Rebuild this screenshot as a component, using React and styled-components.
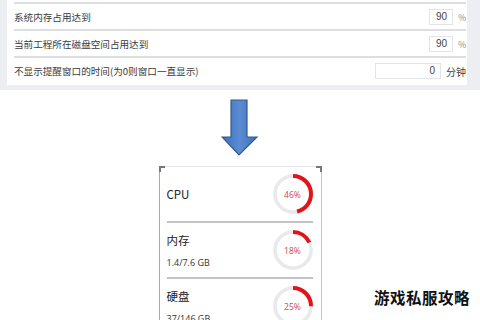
import styled, { createGlobalStyle } from "styled-components";

const GlobalStyle = createGlobalStyle`
    html, body {
        margin: 0;
        padding: 0;
        background: #ffffff;
    }
    body {
        width: 480px;
        height: 320px;
        overflow: hidden;
        font-family: "Noto Sans CJK SC", "Noto Sans", sans-serif;
    }
`

const settings = [
    { label: "系统内存占用达到", value: "90", unit: "%", wide: false },
    { label: "当前工程所在磁盘空间占用达到", value: "90", unit: "%", wide: false },
    { label: "不显示提醒窗口的时间(为0则窗口一直显示)", value: "0", unit: "分钟", wide: true },
]

const monitors = [
    { name: "CPU", detail: null, percent: 46 },
    { name: "内存", detail: "1.4/7.6 GB", percent: 18 },
    { name: "硬盘", detail: "37/146 GB", percent: 25 },
]

function Gauge({ percent }) {
    const r = 18
    const c = 2 * Math.PI * r
    return (
        <GaugeBox>
            <svg width="42" height="42" viewBox="0 0 42 42">
                <circle cx="21" cy="21" r={r} fill="none" stroke="#e8e9ec" strokeWidth="3.5" />
                <circle
                    cx="21" cy="21" r={r} fill="none" stroke="#e0141a" strokeWidth="4"
                    strokeDasharray={`${(c * percent) / 100} ${c}`}
                    transform="rotate(-90 21 21)"
                />
            </svg>
            <GaugeText>{percent}%</GaugeText>
        </GaugeBox>
    )
}

export default function App() {
    return (
        <>
            <GlobalStyle />
            <Page>
                <SettingsPanel>
                    <SettingsCard>
                        {settings.map((s) => (
                            <SettingRow key={s.label}>
                                <span>{s.label}</span>
                                <Control>
                                    <NumberBox wide={s.wide}>{s.value}</NumberBox>
                                    <Unit cjk={s.wide}>{s.unit}</Unit>
                                </Control>
                            </SettingRow>
                        ))}
                    </SettingsCard>
                </SettingsPanel>

                <ArrowWrap>
                    <svg width="38" height="58" viewBox="0 0 38 58">
                        <defs>
                            <linearGradient id="arrowFill" x1="0" y1="0" x2="1" y2="0">
                                <stop offset="0" stopColor="#3f6fb8" />
                                <stop offset="0.5" stopColor="#5b8bd2" />
                                <stop offset="1" stopColor="#3f6fb8" />
                            </linearGradient>
                        </defs>
                        <path
                            d="M10 1 H26 V38 H36 L18 56 L1 38 H10 Z"
                            fill="url(#arrowFill)"
                            stroke="#34598f"
                            strokeWidth="1.2"
                        />
                    </svg>
                </ArrowWrap>

                <MonitorCard>
                    {monitors.map((m) => (
                        <MonitorRow key={m.name}>
                            <MonitorInfo>
                                <MonitorName>{m.name}</MonitorName>
                                {m.detail && <MonitorDetail>{m.detail}</MonitorDetail>}
                            </MonitorInfo>
                            <Gauge percent={m.percent} />
                        </MonitorRow>
                    ))}
                </MonitorCard>

                <Watermark>游戏私服攻略</Watermark>
            </Page>
        </>
    )
}

const Page = styled.div`
    position: relative;
    width: 480px;
    height: 320px;
    display: flex;
    flex-direction: column;
    align-items: center;
`
const SettingsPanel = styled.section`
    width: 480px;
    box-sizing: border-box;
    background-color: #eceef1;
    padding: 0 13px 5px 7px;
`
const SettingsCard = styled.div`
    background-color: #ffffff;
    padding: 2px 1px 1px 7px;
`
const SettingRow = styled.div`
    height: 25px;
    display: flex;
    align-items: center;
    justify-content: space-between;
    border-top: 2px solid #dcdee2;
    font-size: 9.6px;
    color: #3c3c3c;

    &:last-child{
        height: 26px;
    }
`
const Control = styled.div`
    display: flex;
    align-items: center;
    gap: 5px;
`
const NumberBox = styled.div`
    width: ${(p) => (p.wide ? "66px" : "24px")};
    height: 16px;
    box-sizing: border-box;
    border: 1px solid #e2e4e8;
    padding-right: 5px;
    text-align: right;
    font-family: "Liberation Sans", sans-serif;
    font-size: 10px;
    line-height: 14px;
    color: #444;
`
const Unit = styled.span`
    white-space: nowrap;
    min-width: 7px;
    font-size: ${(p) => (p.cjk ? "10px" : "8.5px")};
    color: ${(p) => (p.cjk ? "#444" : "#888")};
`
const ArrowWrap = styled.div`
    margin-top: 9px;
    height: 58px;
    display: flex;
`
const MonitorCard = styled.section`
    position: relative;
    margin-top: 9px;
    width: 163px;
    box-sizing: border-box;
    padding: 0 8px 0 7px;
    background-color: #ffffff;
    border-left: 1px solid #a8a8a8;
    border-right: 1px solid #c4c4c4;
    border-top: 1px solid #e6e6e6;

    &::before, &::after{
        content: "";
        position: absolute;
        top: -1px;
        width: 4px;
        height: 4px;
        border-top: 2px solid #777;
    }
    &::before{
        left: -1px;
        border-left: 2px solid #777;
    }
    &::after{
        right: -1px;
        border-right: 2px solid #777;
    }
`
const MonitorRow = styled.div`
    height: 54px;
    display: flex;
    align-items: center;
    justify-content: space-between;
    border-bottom: 2px solid #c2c2c2;
`
const MonitorInfo = styled.div`
    display: flex;
    flex-direction: column;
    gap: 9px;
    padding-top: ${(p) => (p.children ? "0" : "0")};
    color: #222;
`
const MonitorName = styled.span`
    font-size: 11.5px;
    line-height: 16px;
`
const MonitorDetail = styled.span`
    font-family: "Open Sans", sans-serif;
    font-size: 9px;
    line-height: 12px;
    color: #333;
`
const GaugeBox = styled.div`
    position: relative;
    width: 42px;
    height: 42px;
    margin-right: -1px;
`
const GaugeText = styled.span`
    position: absolute;
    inset: 0;
    display: flex;
    align-items: center;
    justify-content: center;
    font-family: "Open Sans", sans-serif;
    font-size: 8.5px;
    color: #d04848;
`
const Watermark = styled.div`
    position: absolute;
    left: 374px;
    top: 286px;
    font-size: 15.5px;
    font-weight: 700;
    letter-spacing: 0.5px;
    color: #111;
`
